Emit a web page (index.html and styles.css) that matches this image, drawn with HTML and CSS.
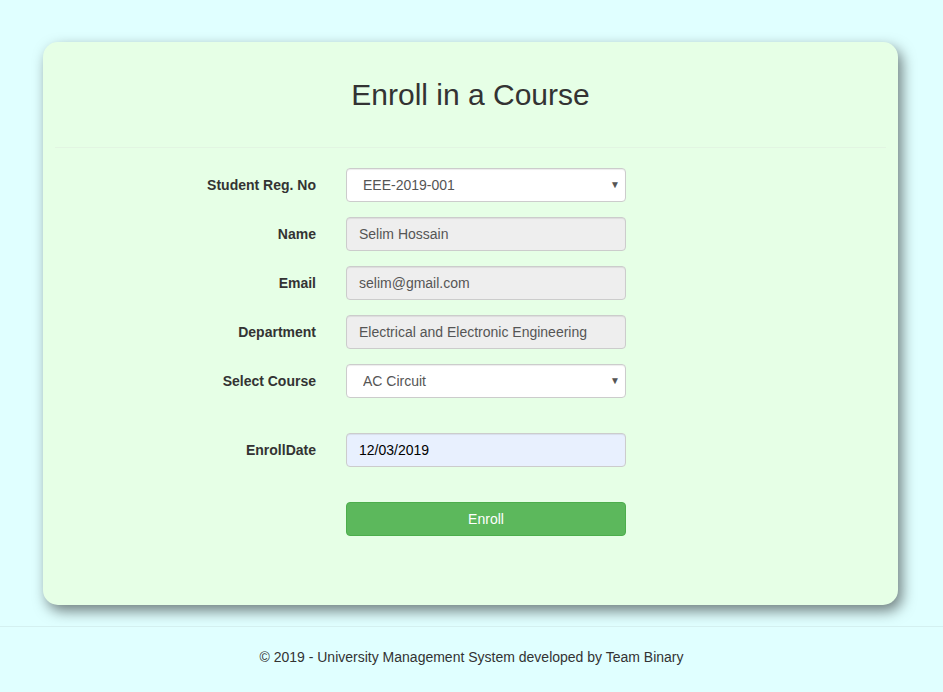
FILE: index.html
```html
<!DOCTYPE html>
<html lang="en">
<head>
<meta charset="utf-8">
<title>Enroll in a Course</title>
<link rel="stylesheet" href="styles.css">
</head>
<body>
<main class="card">
  <h2 class="title">Enroll in a Course</h2>
  <hr class="divider">
  <form class="form">
    <div class="row">
      <label class="label" for="reg">Student Reg. No</label>
      <div class="select-wrap">
        <select id="reg" class="control select"><option>EEE-2019-001</option></select>
        <span class="arrow">▼</span>
      </div>
    </div>
    <div class="row">
      <label class="label" for="name">Name</label>
      <input id="name" class="control readonly" value="Selim Hossain" readonly>
    </div>
    <div class="row">
      <label class="label" for="email">Email</label>
      <input id="email" class="control readonly" value="selim@gmail.com" readonly>
    </div>
    <div class="row">
      <label class="label" for="dept">Department</label>
      <input id="dept" class="control readonly" value="Electrical and Electronic Engineering" readonly>
    </div>
    <div class="row">
      <label class="label" for="course">Select Course</label>
      <div class="select-wrap">
        <select id="course" class="control select"><option>AC Circuit</option></select>
        <span class="arrow">▼</span>
      </div>
    </div>
    <div class="row row-spaced">
      <label class="label" for="date">EnrollDate</label>
      <input id="date" class="control date" value="12/03/2019">
    </div>
    <div class="row row-spaced">
      <span class="label"></span>
      <button type="button" class="btn">Enroll</button>
    </div>
  </form>
</main>
<footer class="footer">
  <p>© 2019 - University Management System developed by Team Binary</p>
</footer>
</body>
</html>
```

FILE: styles.css
```css
* { box-sizing: border-box; }
html, body { margin: 0; padding: 0; }
body {
  background: #e0ffff;
  font-family: "Liberation Sans", Arial, sans-serif;
  font-size: 14px;
  color: #333;
  min-height: 692px;
}
.card {
  margin: 42px 0 0 43px;
  width: 855px;
  height: 563px;
  background: #e6ffe6;
  border-radius: 15px;
  box-shadow: 4px 6px 14px rgba(0, 0, 0, 0.5);
  padding: 36px 12px 0;
}
.title {
  margin: 0;
  font-size: 30px;
  font-weight: 500;
  line-height: 33px;
  text-align: center;
  color: #333;
}
.divider {
  margin: 36px 0 20px;
  border: 0;
  border-top: 1px solid #e2f5e2;
  height: 0;
}
.form { display: flex; flex-direction: column; gap: 15px; }
.row {
  display: grid;
  grid-template-columns: 261px 280px;
  column-gap: 30px;
  align-items: center;
}
.row-spaced { margin-top: 20px; }
.label {
  text-align: right;
  font-weight: bold;
  color: #333;
}
.control {
  display: block;
  width: 280px;
  height: 34px;
  padding: 6px 12px;
  font: 14px "Liberation Sans", Arial, sans-serif;
  color: #555;
  background: #fff;
  border: 1px solid #ccc;
  border-radius: 4px;
  box-shadow: inset 0 1px 1px rgba(0,0,0,0.075);
  outline: none;
}
.readonly { background: #eee; }
.date { background: #e8f0fe; color: #000; }
.select-wrap { position: relative; width: 280px; }
.select {
  appearance: none;
  -webkit-appearance: none;
  padding-left: 16px;
}
.arrow {
  position: absolute;
  right: 6px;
  top: 11px;
  font-size: 10px;
  line-height: 12px;
  color: #555;
  pointer-events: none;
}
.btn {
  width: 280px;
  height: 34px;
  background: #5cb85c;
  border: 1px solid #4cae4c;
  border-radius: 4px;
  color: #fff;
  font: 14px "Liberation Sans", Arial, sans-serif;
  cursor: pointer;
}
.footer {
  margin-top: 21px;
  border-top: 1px solid #d4f0f0;
  padding-top: 20px;
  text-align: center;
}
.footer p { margin: 0; line-height: 20px; }
```
